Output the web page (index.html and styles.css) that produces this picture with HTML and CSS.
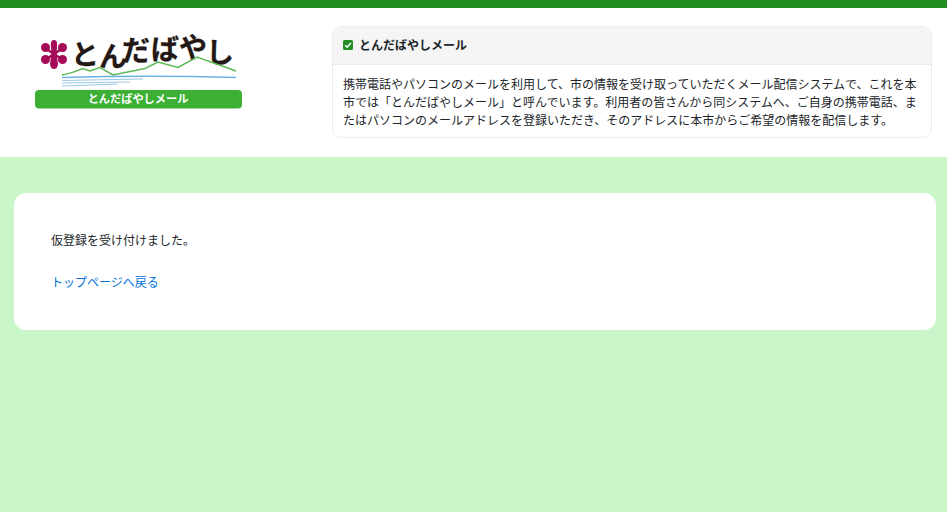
FILE: index.html
```html
<!DOCTYPE html>
<html lang="ja">
<head>
<meta charset="utf-8">
<title>とんだばやしメール</title>
<link rel="stylesheet" href="styles.css">
</head>
<body>
<header class="site-header">
  <div class="logo">
    <svg class="logo-svg" width="230" height="95" viewBox="0 0 230 95">
      <g class="flower">
        <path class="flower-spokes" d="M25 24 L43 36 M43 24 L25 36"/>
        <path d="M34 16 C37 16 37.500 19 37 23 L36.500 29 L38 40 C38 43 36 45 34 45 C32 45 30 43 30 40 L31.500 29 L31 23 C30.500 19 31 16 34 16 Z"/>
        <circle cx="25.500" cy="23.500" r="4.500"/>
        <circle cx="42.500" cy="23.500" r="4.500"/>
        <circle cx="25.500" cy="35.500" r="4.500"/>
        <circle cx="42.500" cy="35.500" r="4.500"/>
      </g>
      <text class="logo-name" x="51 79 102 131 159 186" y="41 42.500 37 36 34 39">とんだばやし</text>
      <path class="ridge" d="M42 51 C50 50 56 47 63 44.500 L70 47 L80 43.500 L93 51 L125 44.500 L138 38 L158 43.500 L177 33 L216 47"/>
      <path class="river" d="M42 53.500 C100 52 160 52 216 53.500"/>
      <path class="river thin" d="M42 56.500 L123 55"/>
      <path class="river thin" d="M42 59 L110 58"/>
      <path class="river thin" d="M42 62 L97 60"/>
      <rect class="banner" x="15" y="66" width="207" height="18.500" rx="4"/>
      <text class="banner-text" x="118" y="79" text-anchor="middle">とんだばやしメール</text>
    </svg>
  </div>
  <section class="info-card">
    <h1 class="info-title">
      <svg class="check" width="10" height="10" viewBox="0 0 10 10"><rect width="10" height="10" rx="1.500" fill="#228b22"/><path d="M2.200 5.200 L4.200 7.200 L7.900 3" fill="none" stroke="#fff" stroke-width="1.600"/></svg>
      とんだばやしメール
    </h1>
    <p class="info-body">携帯電話やパソコンのメールを利用して、市の情報を受け取っていただくメール配信システムで、これを本市では「とんだばやしメール」と呼んでいます。利用者の皆さんから同システムへ、ご自身の携帯電話、またはパソコンのメールアドレスを登録いただき、そのアドレスに本市からご希望の情報を配信します。</p>
  </section>
</header>
<main class="main">
  <div class="panel">
    <p class="message">仮登録を受け付けました。</p>
    <a class="top-link" href="#">トップページへ戻る</a>
  </div>
</main>
</body>
</html>
```

FILE: styles.css
```css
* { box-sizing: border-box; }
html, body { height: 100%; }
body {
  margin: 0;
  display: flex;
  flex-direction: column;
  background: #c9f7c9;
  color: #212529;
  font-family: "Noto Sans CJK JP", "Noto Sans", sans-serif;
  font-size: 12px;
  line-height: 18px;
  overflow: hidden;
}
.site-header {
  display: flex;
  height: 157px;
  padding: 18px 15px 19px 20px;
  background: #fff;
  border-top: 8px solid #228b22;
}
.logo { width: 312px; flex: none; }
.logo-svg { display: block; margin-top: -2px; }
.flower { fill: #a50b58; }
.flower-spokes { fill: none; stroke: #a50b58; stroke-width: 2.500; }
.logo-name {
  font-family: "Noto Sans CJK JP", sans-serif;
  font-size: 28px;
  font-weight: 700;
  fill: #231815;
  stroke: #231815;
  stroke-width: .3;
  stroke-linejoin: round;
}
.ridge { fill: none; stroke: #5cba55; stroke-width: 1.500; }
.river { fill: none; stroke: #6db2e4; stroke-width: 1.500; }
.river.thin { stroke: #9cc8e8; stroke-width: 1; }
.banner { fill: #3cb034; }
.banner-text {
  font-family: "Noto Sans CJK JP", sans-serif;
  font-size: 11.200px;
  font-weight: 700;
  fill: #fff;
}
.info-card {
  flex: 1;
  height: 112px;
  background: #fff;
  border: 1px solid #ececec;
  border-radius: 10px;
  overflow: hidden;
}
.info-title {
  display: flex;
  align-items: center;
  gap: 6px;
  height: 38px;
  margin: 0;
  padding: 0 10px 2px;
  background: #f5f5f5;
  border-bottom: 1px solid #ececec;
  font-size: 12px;
  font-weight: 700;
}
.info-body {
  margin: 0;
  padding: 9.500px 10px 8px;
}
.main {
  flex: 1;
  padding: 36px 11px 0 14px;
}
.panel {
  height: 137px;
  padding: 38px 37px;
  background: #fff;
  border-radius: 12px;
}
.message { margin: 0 0 24px; }
.top-link { color: #0070d8; text-decoration: none; }
```
